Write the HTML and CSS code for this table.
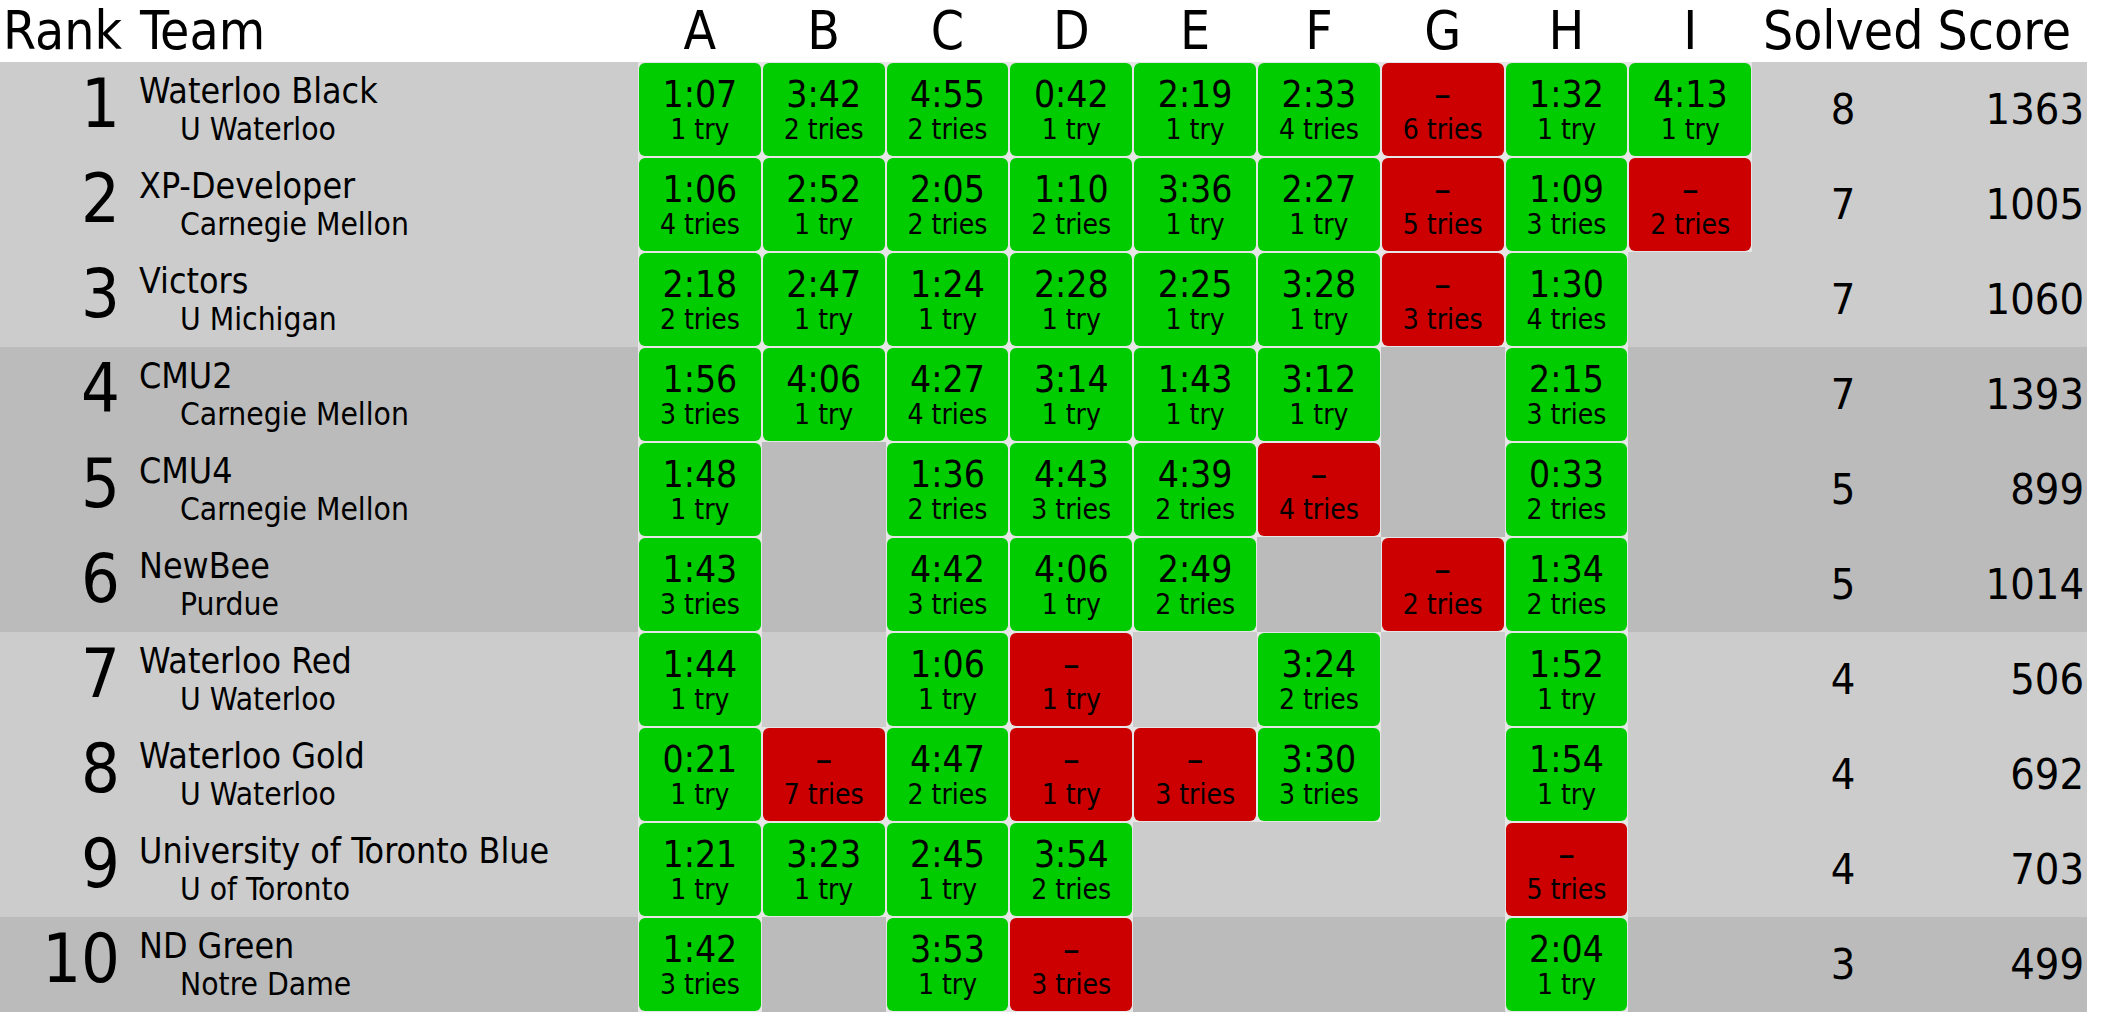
FILE: index.html
```html
<!DOCTYPE html>
<html>
<head>
<meta charset="utf-8">
<link rel="stylesheet" href="styles.css">
</head>
<body>
<div class="board">
  <div class="row head">
    <div class="h-rank">Rank</div>
    <div class="h-team">Team</div>
    <div class="h-prob">A</div><div class="h-prob">B</div><div class="h-prob">C</div><div class="h-prob">D</div><div class="h-prob">E</div><div class="h-prob">F</div><div class="h-prob">G</div><div class="h-prob">H</div><div class="h-prob">I</div>
    <div class="h-solved">Solved</div>
    <div class="h-score">Score</div>
  </div>

  <div class="row light">
    <div class="rank">1</div>
    <div class="team"><div class="name">Waterloo Black</div><div class="aff">U Waterloo</div></div>
    <div class="cell"><div class="ok"><div class="t">1:07</div><div class="n">1 try</div></div></div>
    <div class="cell"><div class="ok"><div class="t">3:42</div><div class="n">2 tries</div></div></div>
    <div class="cell"><div class="ok"><div class="t">4:55</div><div class="n">2 tries</div></div></div>
    <div class="cell"><div class="ok"><div class="t">0:42</div><div class="n">1 try</div></div></div>
    <div class="cell"><div class="ok"><div class="t">2:19</div><div class="n">1 try</div></div></div>
    <div class="cell"><div class="ok"><div class="t">2:33</div><div class="n">4 tries</div></div></div>
    <div class="cell"><div class="bad"><div class="t">–</div><div class="n">6 tries</div></div></div>
    <div class="cell"><div class="ok"><div class="t">1:32</div><div class="n">1 try</div></div></div>
    <div class="cell"><div class="ok"><div class="t">4:13</div><div class="n">1 try</div></div></div>
    <div class="solved">8</div>
    <div class="score">1363</div>
  </div>

  <div class="row light">
    <div class="rank">2</div>
    <div class="team"><div class="name">XP-Developer</div><div class="aff">Carnegie Mellon</div></div>
    <div class="cell"><div class="ok"><div class="t">1:06</div><div class="n">4 tries</div></div></div>
    <div class="cell"><div class="ok"><div class="t">2:52</div><div class="n">1 try</div></div></div>
    <div class="cell"><div class="ok"><div class="t">2:05</div><div class="n">2 tries</div></div></div>
    <div class="cell"><div class="ok"><div class="t">1:10</div><div class="n">2 tries</div></div></div>
    <div class="cell"><div class="ok"><div class="t">3:36</div><div class="n">1 try</div></div></div>
    <div class="cell"><div class="ok"><div class="t">2:27</div><div class="n">1 try</div></div></div>
    <div class="cell"><div class="bad"><div class="t">–</div><div class="n">5 tries</div></div></div>
    <div class="cell"><div class="ok"><div class="t">1:09</div><div class="n">3 tries</div></div></div>
    <div class="cell"><div class="bad"><div class="t">–</div><div class="n">2 tries</div></div></div>
    <div class="solved">7</div>
    <div class="score">1005</div>
  </div>

  <div class="row light">
    <div class="rank">3</div>
    <div class="team"><div class="name">Victors</div><div class="aff">U Michigan</div></div>
    <div class="cell"><div class="ok"><div class="t">2:18</div><div class="n">2 tries</div></div></div>
    <div class="cell"><div class="ok"><div class="t">2:47</div><div class="n">1 try</div></div></div>
    <div class="cell"><div class="ok"><div class="t">1:24</div><div class="n">1 try</div></div></div>
    <div class="cell"><div class="ok"><div class="t">2:28</div><div class="n">1 try</div></div></div>
    <div class="cell"><div class="ok"><div class="t">2:25</div><div class="n">1 try</div></div></div>
    <div class="cell"><div class="ok"><div class="t">3:28</div><div class="n">1 try</div></div></div>
    <div class="cell"><div class="bad"><div class="t">–</div><div class="n">3 tries</div></div></div>
    <div class="cell"><div class="ok"><div class="t">1:30</div><div class="n">4 tries</div></div></div>
    <div class="empty"></div>
    <div class="solved">7</div>
    <div class="score">1060</div>
  </div>

  <div class="row dark">
    <div class="rank">4</div>
    <div class="team"><div class="name">CMU2</div><div class="aff">Carnegie Mellon</div></div>
    <div class="cell"><div class="ok"><div class="t">1:56</div><div class="n">3 tries</div></div></div>
    <div class="cell"><div class="ok"><div class="t">4:06</div><div class="n">1 try</div></div></div>
    <div class="cell"><div class="ok"><div class="t">4:27</div><div class="n">4 tries</div></div></div>
    <div class="cell"><div class="ok"><div class="t">3:14</div><div class="n">1 try</div></div></div>
    <div class="cell"><div class="ok"><div class="t">1:43</div><div class="n">1 try</div></div></div>
    <div class="cell"><div class="ok"><div class="t">3:12</div><div class="n">1 try</div></div></div>
    <div class="empty"></div>
    <div class="cell"><div class="ok"><div class="t">2:15</div><div class="n">3 tries</div></div></div>
    <div class="empty"></div>
    <div class="solved">7</div>
    <div class="score">1393</div>
  </div>

  <div class="row dark">
    <div class="rank">5</div>
    <div class="team"><div class="name">CMU4</div><div class="aff">Carnegie Mellon</div></div>
    <div class="cell"><div class="ok"><div class="t">1:48</div><div class="n">1 try</div></div></div>
    <div class="empty"></div>
    <div class="cell"><div class="ok"><div class="t">1:36</div><div class="n">2 tries</div></div></div>
    <div class="cell"><div class="ok"><div class="t">4:43</div><div class="n">3 tries</div></div></div>
    <div class="cell"><div class="ok"><div class="t">4:39</div><div class="n">2 tries</div></div></div>
    <div class="cell"><div class="bad"><div class="t">–</div><div class="n">4 tries</div></div></div>
    <div class="empty"></div>
    <div class="cell"><div class="ok"><div class="t">0:33</div><div class="n">2 tries</div></div></div>
    <div class="empty"></div>
    <div class="solved">5</div>
    <div class="score">899</div>
  </div>

  <div class="row dark">
    <div class="rank">6</div>
    <div class="team"><div class="name">NewBee</div><div class="aff">Purdue</div></div>
    <div class="cell"><div class="ok"><div class="t">1:43</div><div class="n">3 tries</div></div></div>
    <div class="empty"></div>
    <div class="cell"><div class="ok"><div class="t">4:42</div><div class="n">3 tries</div></div></div>
    <div class="cell"><div class="ok"><div class="t">4:06</div><div class="n">1 try</div></div></div>
    <div class="cell"><div class="ok"><div class="t">2:49</div><div class="n">2 tries</div></div></div>
    <div class="empty"></div>
    <div class="cell"><div class="bad"><div class="t">–</div><div class="n">2 tries</div></div></div>
    <div class="cell"><div class="ok"><div class="t">1:34</div><div class="n">2 tries</div></div></div>
    <div class="empty"></div>
    <div class="solved">5</div>
    <div class="score">1014</div>
  </div>

  <div class="row light">
    <div class="rank">7</div>
    <div class="team"><div class="name">Waterloo Red</div><div class="aff">U Waterloo</div></div>
    <div class="cell"><div class="ok"><div class="t">1:44</div><div class="n">1 try</div></div></div>
    <div class="empty"></div>
    <div class="cell"><div class="ok"><div class="t">1:06</div><div class="n">1 try</div></div></div>
    <div class="cell"><div class="bad"><div class="t">–</div><div class="n">1 try</div></div></div>
    <div class="empty"></div>
    <div class="cell"><div class="ok"><div class="t">3:24</div><div class="n">2 tries</div></div></div>
    <div class="empty"></div>
    <div class="cell"><div class="ok"><div class="t">1:52</div><div class="n">1 try</div></div></div>
    <div class="empty"></div>
    <div class="solved">4</div>
    <div class="score">506</div>
  </div>

  <div class="row light">
    <div class="rank">8</div>
    <div class="team"><div class="name">Waterloo Gold</div><div class="aff">U Waterloo</div></div>
    <div class="cell"><div class="ok"><div class="t">0:21</div><div class="n">1 try</div></div></div>
    <div class="cell"><div class="bad"><div class="t">–</div><div class="n">7 tries</div></div></div>
    <div class="cell"><div class="ok"><div class="t">4:47</div><div class="n">2 tries</div></div></div>
    <div class="cell"><div class="bad"><div class="t">–</div><div class="n">1 try</div></div></div>
    <div class="cell"><div class="bad"><div class="t">–</div><div class="n">3 tries</div></div></div>
    <div class="cell"><div class="ok"><div class="t">3:30</div><div class="n">3 tries</div></div></div>
    <div class="empty"></div>
    <div class="cell"><div class="ok"><div class="t">1:54</div><div class="n">1 try</div></div></div>
    <div class="empty"></div>
    <div class="solved">4</div>
    <div class="score">692</div>
  </div>

  <div class="row light">
    <div class="rank">9</div>
    <div class="team"><div class="name">University of Toronto Blue</div><div class="aff">U of Toronto</div></div>
    <div class="cell"><div class="ok"><div class="t">1:21</div><div class="n">1 try</div></div></div>
    <div class="cell"><div class="ok"><div class="t">3:23</div><div class="n">1 try</div></div></div>
    <div class="cell"><div class="ok"><div class="t">2:45</div><div class="n">1 try</div></div></div>
    <div class="cell"><div class="ok"><div class="t">3:54</div><div class="n">2 tries</div></div></div>
    <div class="empty"></div>
    <div class="empty"></div>
    <div class="empty"></div>
    <div class="cell"><div class="bad"><div class="t">–</div><div class="n">5 tries</div></div></div>
    <div class="empty"></div>
    <div class="solved">4</div>
    <div class="score">703</div>
  </div>

  <div class="row dark">
    <div class="rank">10</div>
    <div class="team"><div class="name">ND Green</div><div class="aff">Notre Dame</div></div>
    <div class="cell"><div class="ok"><div class="t">1:42</div><div class="n">3 tries</div></div></div>
    <div class="empty"></div>
    <div class="cell"><div class="ok"><div class="t">3:53</div><div class="n">1 try</div></div></div>
    <div class="cell"><div class="bad"><div class="t">–</div><div class="n">3 tries</div></div></div>
    <div class="empty"></div>
    <div class="empty"></div>
    <div class="empty"></div>
    <div class="cell"><div class="ok"><div class="t">2:04</div><div class="n">1 try</div></div></div>
    <div class="empty"></div>
    <div class="solved">3</div>
    <div class="score">499</div>
  </div>
</div>
</body>
</html>
```

FILE: styles.css
```css
html, body {
  margin: 0;
  padding: 0;
  background: #ffffff;
  overflow: hidden;
}

body {
  font-family: "DejaVu Sans Condensed", "DejaVu Sans", Verdana, sans-serif;
  font-stretch: condensed;
  color: #000000;
}

.board {
  width: 2087px;
}

.row {
  display: grid;
  grid-template-columns: 128px 510px repeat(9, 123.8px) 182px 1fr;
  height: 95px;
}

.row.head {
  height: 62px;
  background: #ffffff;
  font-size: 53px;
  line-height: 62px;
}

.light { background: #cccccc; }
.dark { background: #bbbbbb; }

.h-rank { padding-left: 3px; }
.h-team { padding-left: 12px; }
.h-prob, .h-solved { text-align: center; }
.h-score {
  text-align: right;
  padding-right: 16px;
}

.rank {
  font-size: 68px;
  line-height: 80px;
  padding-top: 2px;
  padding-right: 8px;
  text-align: right;
}

.team {
  padding-left: 11px;
  padding-top: 9px;
  white-space: nowrap;
}

.name {
  font-size: 35.5px;
  line-height: 40px;
}

.aff {
  font-size: 31.5px;
  line-height: 36px;
  padding-left: 41px;
}

.cell {
  background: #e6e6e6;
  padding: 1px;
}

.ok, .bad {
  height: 100%;
  box-sizing: border-box;
  border-radius: 6px;
  text-align: center;
  padding-top: 12px;
}

.ok { background: #00cc00; }
.bad { background: #cc0000; }

.t {
  font-size: 37px;
  line-height: 40px;
}

.n {
  font-size: 28px;
  line-height: 30px;
}

.solved {
  font-size: 43px;
  line-height: 95px;
  text-align: center;
}

.score {
  font-size: 43px;
  line-height: 95px;
  text-align: right;
  padding-right: 3px;
}
```
